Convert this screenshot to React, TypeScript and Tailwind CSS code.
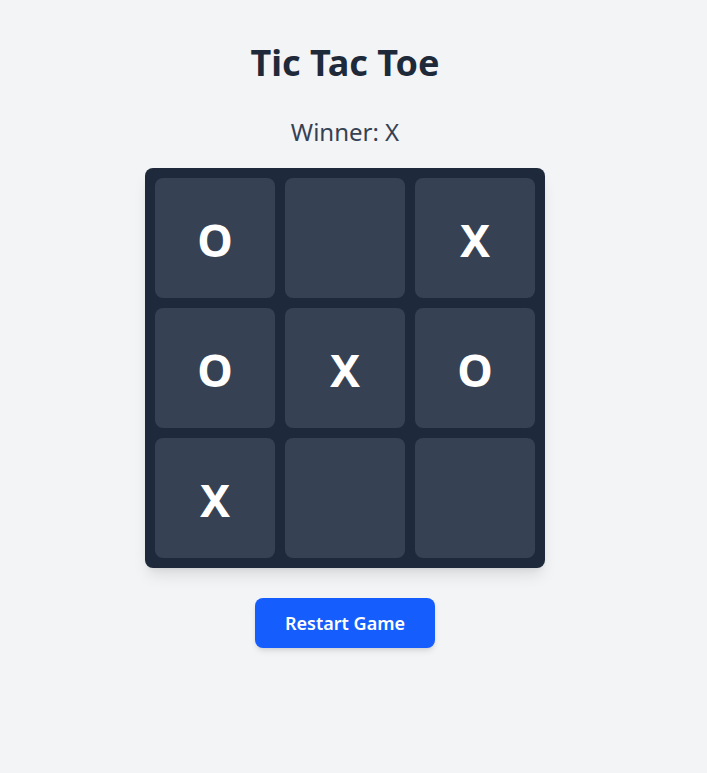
import { useState } from 'react';

type Cell = 'X' | 'O' | null;

const initial: Cell[] = ['O', null, 'X', 'O', 'X', 'O', 'X', null, null];

export default function App() {
  const [board, setBoard] = useState<Cell[]>(initial);

  return (
    <div className="min-h-screen bg-[#f3f4f6]">
      <div
        className="w-[690px] flex flex-col items-center pt-[39px]"
        style={{ fontFamily: '"Noto Sans", "Open Sans", sans-serif' }}
      >
        <h1 className="text-4xl font-bold text-[#1e2939] leading-[48px]">Tic Tac Toe</h1>
        <p className="mt-[29px] text-2xl text-[#364153] leading-8">Winner: X</p>
        <div className="mt-[20px] grid grid-cols-3 gap-[10px] p-[10px] bg-[#1e293b] rounded-lg shadow-lg">
          {board.map((c, i) => (
            <button
              key={i}
              className="w-[120px] h-[120px] rounded-lg bg-[#364153] text-white text-[45px] font-bold flex items-center justify-center pt-[3px]"
            >
              {c}
            </button>
          ))}
        </div>
        <button
          onClick={() => setBoard(Array(9).fill(null))}
          className="mt-[30px] h-[50px] px-[30px] rounded-lg bg-[#155dfc] text-white text-lg font-semibold shadow-md"
        >
          Restart Game
        </button>
      </div>
    </div>
  );
}
